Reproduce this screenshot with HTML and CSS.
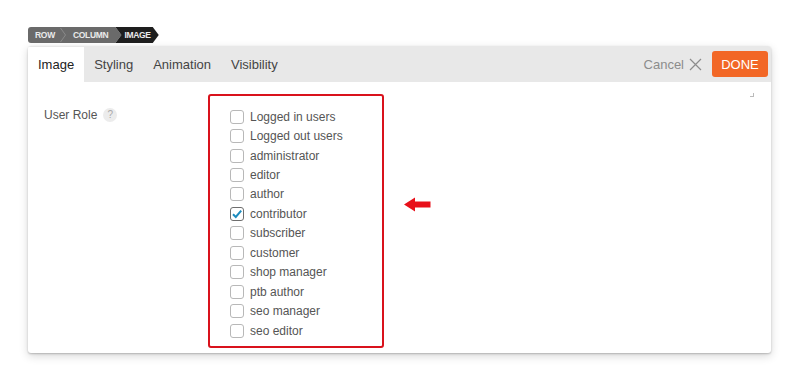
FILE: index.html
```html
<!DOCTYPE html>
<html lang="en">

<head>
  <meta name="viewport" content="width=device-width">
  <title>Image options</title>
  <link rel="stylesheet" href="styles.css">
</head>

<body>
  <div class="breadcrumb">
    <div class="trail">
      <span class="crumb">ROW</span>
      <svg class="sep" width="6" height="16" viewBox="0 0 6 16"><path d="M0.5 1 L5.5 8 L0.5 15" fill="none" stroke="#8a8a8a" stroke-width="1"/></svg>
      <span class="crumb">COLUMN</span>
    </div>
    <span class="crumb current">IMAGE</span>
  </div>

  <div class="panel">
    <div class="tabbar">
      <ul class="tabs">
        <li class="tab active">Image</li>
        <li class="tab">Styling</li>
        <li class="tab">Animation</li>
        <li class="tab">Visibility</li>
      </ul>
      <div class="actions">
        <span class="cancel">Cancel
          <svg width="13" height="13" viewBox="0 0 13 13"><path d="M1 1 L12 12 M12 1 L1 12" stroke="#8c8c8c" stroke-width="1.2"/></svg>
        </span>
        <button class="done">DONE</button>
      </div>
    </div>

    <div class="body">
      <div class="field-label">User Role <span class="help">?</span></div>
      <ul class="roles">
        <li><span class="box"></span>Logged in users</li>
        <li><span class="box"></span>Logged out users</li>
        <li><span class="box"></span>administrator</li>
        <li><span class="box"></span>editor</li>
        <li><span class="box"></span>author</li>
        <li><span class="box checked"><svg width="12" height="12" viewBox="0 0 12 12"><path d="M2 6.2 L4.8 9 L10.2 2.6" fill="none" stroke="#1e8cbe" stroke-width="2"/></svg></span>contributor</li>
        <li><span class="box"></span>subscriber</li>
        <li><span class="box"></span>customer</li>
        <li><span class="box"></span>shop manager</li>
        <li><span class="box"></span>ptb author</li>
        <li><span class="box"></span>seo manager</li>
        <li><span class="box"></span>seo editor</li>
      </ul>
      <svg class="pointer" width="27" height="15" viewBox="0 0 27 15"><path d="M0 7.5 L11 0.5 L11 4.5 L26.5 4.5 L26.5 10.5 L11 10.5 L11 14.5 Z" fill="#e8101a"/></svg>
      <span class="grip"></span>
    </div>
  </div>
</body>

</html>
```

FILE: styles.css
```css
html,
body {
  margin: 0;
  background: white;
}

body {
  font-family: "Liberation Sans", Arial, sans-serif;
  box-sizing: border-box;
  min-height: 386px;
  padding-top: 27px;
  padding-left: 28px;
}

.breadcrumb {
  display: flex;
  height: 16px;
  font-size: 8.5px;
  font-weight: bold;
  letter-spacing: -0.3px;
  line-height: 16px;
}

.trail {
  display: flex;
  background: #6a6a6a;
  border-radius: 3px 0 0 3px;
  padding-right: 8px;
  clip-path: polygon(0 0, calc(100% - 6px) 0, 100% 50%, calc(100% - 6px) 100%, 0 100%);
}

.crumb {
  color: #eaeaea;
  padding: 0 5px 0 7px;
}

.sep {
  display: block;
}

.crumb.current {
  background: #1e1e1e;
  margin-left: -6px;
  padding: 0 8px 0 9px;
  clip-path: polygon(0 0, calc(100% - 6px) 0, 100% 50%, calc(100% - 6px) 100%, 0 100%, 6px 50%);
}

.panel {
  width: 743px;
  margin-top: 3px;
  background: white;
  border-radius: 3px;
  box-shadow: 0 1px 2px rgba(0, 0, 0, 0.22), 0 3px 10px rgba(0, 0, 0, 0.16);
  overflow: hidden;
}

.tabbar {
  display: flex;
  justify-content: space-between;
  align-items: center;
  height: 36px;
  background: #e8e8e8;
}

.tabs {
  display: flex;
  align-self: stretch;
  margin: 0;
  padding: 0;
  list-style: none;
}

.tab {
  display: flex;
  align-items: center;
  padding: 1px 10px 0;
  font-size: 13px;
  color: #444;
}

.tab.active {
  background: white;
  color: #222;
  margin-top: 1px;
  padding-top: 0;
}

.actions {
  display: flex;
  align-items: center;
  gap: 10px;
  padding-right: 3px;
}

.cancel {
  display: flex;
  align-items: center;
  gap: 5px;
  font-size: 13px;
  color: #8c8c8c;
}

.done {
  font-family: inherit;
  font-size: 13px;
  color: white;
  background: #f26726;
  border: none;
  border-radius: 3px;
  width: 56px;
  height: 26px;
  padding: 0;
}

.body {
  position: relative;
  display: flex;
  align-items: flex-start;
  padding: 12px 0 5px 16px;
}

.field-label {
  display: flex;
  align-items: center;
  gap: 6px;
  width: 164px;
  margin-top: 14px;
  font-size: 12px;
  color: #555;
}

.help {
  display: inline-block;
  width: 14px;
  height: 14px;
  border-radius: 50%;
  background: #ececec;
  color: #aaa;
  font-size: 10px;
  line-height: 14px;
  text-align: center;
}

.roles {
  width: 152px;
  margin: 0;
  padding: 11px 0 6px 20px;
  list-style: none;
  border: 2px solid #d9121c;
  border-radius: 3px;
}

.roles li {
  display: flex;
  align-items: center;
  gap: 6px;
  height: 19.45px;
  font-size: 12px;
  color: #555;
}

.box {
  display: flex;
  align-items: center;
  justify-content: center;
  box-sizing: border-box;
  width: 14px;
  height: 14px;
  border: 1px solid #b8b8b8;
  border-radius: 3px;
  background: white;
}

.box.checked {
  border-color: #6e6e6e;
}

.pointer {
  margin: 103px 0 0 20px;
}

.grip {
  position: absolute;
  top: 11px;
  right: 17px;
  width: 3px;
  height: 3px;
  border-right: 1px solid #bbb;
  border-bottom: 1px solid #bbb;
}
```
